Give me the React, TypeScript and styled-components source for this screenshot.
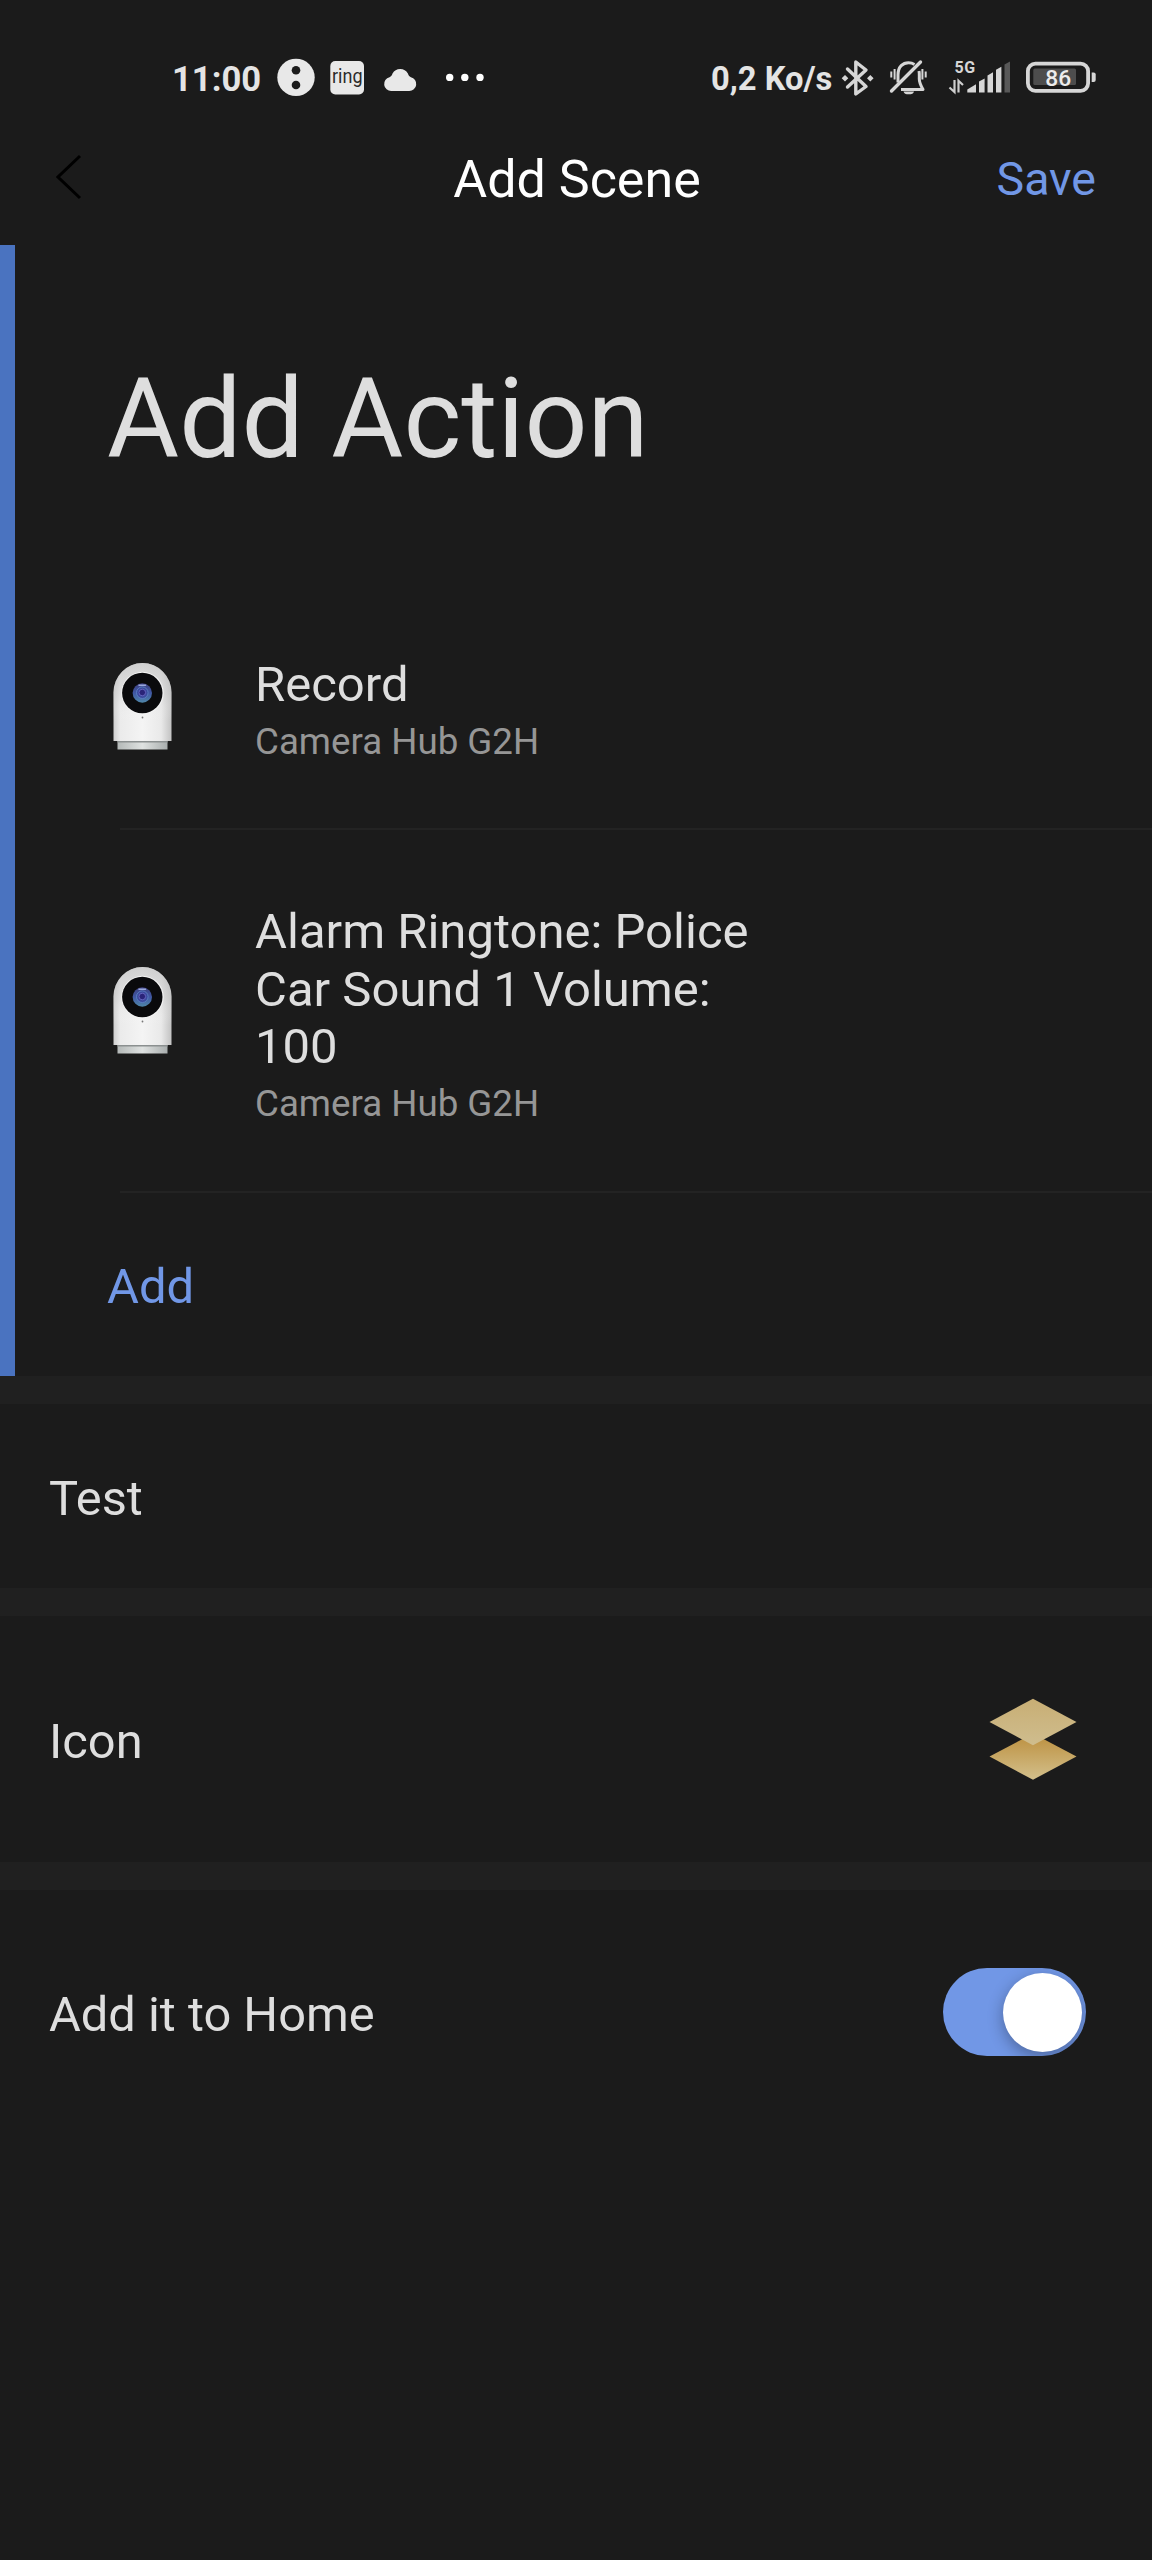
import React, { useState } from 'react';
import styled, { createGlobalStyle } from 'styled-components';

const color = {
  bg: '#1b1b1b',
  band: '#202020',
  line: '#232323',
  text: '#dedede',
  muted: '#969696',
  accent: '#7197e6',
  rail: '#4a73c0',
  status: '#e4e4e4',
};

const GlobalStyle = createGlobalStyle`
  *, *::before, *::after { box-sizing: border-box; }
  body {
    margin: 0;
    background: ${color.bg};
    font-family: Roboto, 'Liberation Sans', sans-serif;
    color: ${color.text};
  }
`;

const Screen = styled.div`
  display: flex;
  flex-direction: column;
  width: 1152px;
  height: 2560px;
  background: ${color.bg};
  overflow: hidden;
`;

const StatusBar = styled.div`
  display: flex;
  justify-content: space-between;
  height: 130px;
  padding: 51px 54px 23px 172px;
  color: ${color.status};
`;

const StatusGroup = styled.div`
  display: flex;
  align-items: center;
  height: 56px;
`;

const Glyph = styled.svg<{ $gap: number }>`
  display: block;
  flex: none;
  margin-left: ${(p) => p.$gap}px;
`;

const StatusText = styled.span<{ $size: number; $width: number }>`
  width: ${(p) => p.$width}px;
  font-size: ${(p) => p.$size}px;
  font-weight: 700;
  line-height: 56px;
  white-space: nowrap;
`;

const Header = styled.header`
  display: grid;
  grid-template-columns: 1fr auto 1fr;
  align-items: start;
  height: 115px;
  padding: 0 56px;
`;

const BackButton = styled.button`
  justify-self: start;
  margin-top: 24px;
  padding: 0;
  border: 0;
  background: none;
  line-height: 0;
`;

const Title = styled.h1`
  margin: 0;
  padding-left: 2px;
  color: #fff;
  font-size: 52px;
  font-weight: 400;
  line-height: 100px;
`;

const SaveButton = styled.button`
  justify-self: end;
  padding: 0;
  border: 0;
  background: none;
  color: ${color.accent};
  font: 400 46.5px/99px Roboto, sans-serif;
`;

const ActionSection = styled.section`
  height: 1131px;
  border-left: 15px solid ${color.rail};
  padding-left: 92px;
`;

const SectionTitle = styled.h2`
  margin: 0;
  padding-top: 100px;
  font-size: 110.6px;
  font-weight: 400;
  line-height: 148px;
  height: 372px;
`;

const ActionRow = styled.div<{ $height: number }>`
  display: flex;
  height: ${(p) => p.$height}px;
`;

const DeviceIcon = styled.svg<{ $top: number }>`
  display: block;
  flex: none;
  margin-top: ${(p) => p.$top}px;
  margin-left: 6px;
`;

const ActionText = styled.div<{ $top: number }>`
  width: 520px;
  margin-left: 83px;
  padding-top: ${(p) => p.$top}px;
`;

const ActionName = styled.div`
  font-size: 49px;
  line-height: 57.67px;
`;

const ActionDevice = styled.div`
  margin-top: 6px;
  font-size: 36.7px;
  line-height: 44px;
  color: ${color.muted};
`;

const Divider = styled.div`
  height: 2px;
  margin-left: 13px;
  background: ${color.line};
`;

const AddButton = styled.button`
  display: block;
  margin-top: 64px;
  padding: 0;
  border: 0;
  background: none;
  color: ${color.accent};
  font: 400 49px/60px Roboto, sans-serif;
`;

const Band = styled.div`
  flex: none;
  height: 28px;
  background: ${color.band};
`;

const SettingRow = styled.div<{ $height: number; $right: number }>`
  display: flex;
  align-items: center;
  justify-content: space-between;
  flex: none;
  height: ${(p) => p.$height}px;
  padding: 0 ${(p) => p.$right}px 0 49px;
`;

const SettingLabel = styled.span`
  padding-top: 5px;
  font-size: 48.8px;
  line-height: 60px;
`;

const Toggle = styled.button<{ $on: boolean }>`
  display: flex;
  align-items: center;
  justify-content: ${(p) => (p.$on ? 'flex-end' : 'flex-start')};
  width: 143.5px;
  height: 87.5px;
  padding: 0 4px;
  border: 0;
  border-radius: 44px;
  background: ${(p) => (p.$on ? color.accent : '#444')};
  overflow: hidden;
`;

const Knob = styled.span`
  width: 79px;
  height: 79px;
  border-radius: 50%;
  background: #fff;
  box-shadow: 0 5px 16px rgba(0, 0, 0, 0.32);
`;

function StatusIconsLeft() {
  return (
    <Glyph $gap={14} width="210" height="56" viewBox="275 51 210 56" fill="#e8e8e8">
      <circle cx="296" cy="77.4" r="18.7" />
      <circle cx="296" cy="70.3" r="4.3" fill={color.bg} />
      <circle cx="296" cy="85" r="4.3" fill={color.bg} />
      <rect x="330.3" y="61" width="33.7" height="33.4" rx="5" />
      <text
        x="332"
        y="82.5"
        fill="#2a2a2a"
        fontFamily="Roboto, sans-serif"
        fontSize="21"
        textLength="30.5"
        lengthAdjust="spacingAndGlyphs"
      >
        ring
      </text>
      <path d="M391.3 91 A7 7 0 0 1 389.5 77.2 C391.2 76.7 391.9 75.5 392.5 73.6 A8.8 8.8 0 0 1 407.9 73.6 C408.5 75.5 409.2 76.7 410.9 77.2 A7 7 0 0 1 409.1 91 Z" />
      <circle cx="449.7" cy="77.4" r="3.7" fill="#fff" />
      <circle cx="464.8" cy="77.4" r="3.7" fill="#fff" />
      <circle cx="480" cy="77.4" r="3.7" fill="#fff" />
    </Glyph>
  );
}

function StatusIconsRight() {
  return (
    <Glyph $gap={4} width="258" height="56" viewBox="840 51 258 56" fill="none">
      <path
        d="M847.5 69 L866 86.5 L855.8 94 V62 L866 70 L847.5 87"
        stroke="#d6d6d6"
        strokeWidth="3.4"
        strokeLinejoin="round"
        strokeLinecap="round"
      />
      <path
        d="M845 75 l3.3 3.3 l-3.3 3.3 l-3.3 -3.3 z M870.3 75 l3.3 3.3 l-3.3 3.3 l-3.3 -3.3 z"
        fill="#d6d6d6"
      />
      <g stroke="#d6d6d6" strokeWidth="3" strokeLinejoin="round">
        <path d="M898 82.5 V75 C898 66.5 903 62.7 908.5 62.7 C911 62.7 913 63.4 914.5 64.4" />
        <path d="M919 71 C919.5 73 919.3 75 919.3 79 C919.3 83 920.5 85 923 89.5 H901" />
        <path d="M891.5 91 L920.5 62" strokeWidth="3.4" strokeLinecap="round" />
        <path d="M891.3 71.5 V77.5 M894.6 69 V79.5 M922.4 69 V79.5 M925.7 71.5 V77.5" strokeWidth="2" />
      </g>
      <path d="M903.5 91.5 h10.5 a5.3 3.3 0 0 1 -10.5 0 z" fill="#d6d6d6" />
      <text x="954.6" y="73.4" fill="#d6d6d6" fontFamily="Roboto, sans-serif" fontWeight="700" fontSize="16" textLength="20.6">
        5G
      </text>
      <path d="M954.5 80 V92 L949.5 87.5 M958.5 92.5 V80.8 L963 85" stroke="#cfcfcf" strokeWidth="2.2" />
      <g fill="#d6d6d6">
        <path d="M967.3 92.6 V89.5 L976 84.3 V92.6 z" />
        <path d="M979 92.6 V81.5 L984.6 78.5 V92.6 z" />
        <path d="M987.5 92.6 V75.5 L993 72.3 V92.6 z" />
        <path d="M996 92.6 V69.8 L1001.4 66.8 V92.6 z" />
        <path d="M1004.5 92.6 V64.5 L1010 61.5 V92.6 z" fill="#585858" />
      </g>
      <rect x="1027.9" y="63.6" width="60.2" height="27.2" rx="7.5" stroke="#d6d6d6" strokeWidth="3.8" />
      <rect x="1033.3" y="68.6" width="42.7" height="16.4" rx="1.5" fill="#4d4d4d" />
      <path d="M1091.7 72.4 h2 a2 2 0 0 1 2 2 v5.6 a2 2 0 0 1 -2 2 h-2 z" fill="#d6d6d6" />
      <text x="1045.3" y="86" fill="#ececec" fontFamily="Roboto, sans-serif" fontWeight="500" fontSize="22.8">
        86
      </text>
    </Glyph>
  );
}

function Camera({ id, top }: { id: string; top: number }) {
  return (
    <DeviceIcon $top={top} width="59" height="88" viewBox="0 0 59 88">
      <defs>
        <linearGradient id={`${id}-body`} x1="0" x2="1" y1="0" y2="0">
          <stop offset="0" stopColor="#cfcfcf" />
          <stop offset=".12" stopColor="#ebebeb" />
          <stop offset=".5" stopColor="#f4f4f4" />
          <stop offset=".82" stopColor="#e9e9e9" />
          <stop offset="1" stopColor="#c2c2c2" />
        </linearGradient>
        <linearGradient id={`${id}-top`} x1="0" x2="0" y1="0" y2="1">
          <stop offset="0" stopColor="#b4b4b4" stopOpacity=".55" />
          <stop offset=".4" stopColor="#cccccc" stopOpacity=".35" />
          <stop offset=".75" stopColor="#fff" stopOpacity="0" />
        </linearGradient>
        <linearGradient id={`${id}-base`} x1="0" x2="1" y1="0" y2="0">
          <stop offset="0" stopColor="#b4b9b8" />
          <stop offset=".5" stopColor="#dfe2e1" />
          <stop offset="1" stopColor="#a9aeae" />
        </linearGradient>
        <linearGradient id={`${id}-lens`} x1="0" x2="0" y1="0" y2="1">
          <stop offset="0" stopColor="#3d3f80" />
          <stop offset=".5" stopColor="#4058a4" />
          <stop offset="1" stopColor="#4f86a8" />
        </linearGradient>
      </defs>
      <rect x="4.5" y="76" width="50" height="10.5" fill={`url(#${id}-base)`} />
      <rect x="4.5" y="78" width="50" height="1.5" fill="#8b9090" />
      <path d="M.5 78 V29.5 a29 29.5 0 0 1 58 0 V78 z" fill={`url(#${id}-body)`} />
      <path d="M.5 78 V29.5 a29 29.5 0 0 1 58 0 V78 z" fill={`url(#${id}-top)`} />
      <circle cx="29.5" cy="30" r="21.2" fill="#f4f4f4" />
      <circle cx="29.3" cy="30" r="20.2" fill="#0a0a0c" />
      <circle cx="29.3" cy="30" r="9.7" fill={`url(#${id}-lens)`} />
      <circle cx="29.3" cy="29.7" r="5.8" fill="#3b4a9c" stroke="#5c80c4" strokeWidth=".9" />
      <circle cx="29.3" cy="29.5" r="3.3" fill="#2a2478" stroke="#6a68c4" strokeWidth=".9" />
      <path d="M26 22.2 h6.5" stroke="#9aa8dc" strokeWidth="1.5" strokeLinecap="round" />
      <circle cx="29.5" cy="54.5" r=".9" fill="#777" />
    </DeviceIcon>
  );
}

function LayersIcon() {
  return (
    <svg width="88" height="82" viewBox="0 0 88 82">
      <defs>
        <linearGradient id="layer-upper" x1="0" x2="0" y1="0" y2="1">
          <stop offset="0" stopColor="#c8ae74" />
          <stop offset="1" stopColor="#cfbd8e" />
        </linearGradient>
        <linearGradient id="layer-lower" x1="0" x2="0" y1="0" y2="1">
          <stop offset=".15" stopColor="#bf9649" />
          <stop offset="1" stopColor="#d3c08c" />
        </linearGradient>
      </defs>
      <path d="M44 35.5 L87.5 58.5 L44 81.7 L.5 58.5 z" fill="url(#layer-lower)" />
      <path d="M44 .7 L87.5 24 L44 47.2 L.5 24 z" fill="url(#layer-upper)" />
    </svg>
  );
}

export default function App() {
  const [onHome, setOnHome] = useState(true);
  return (
    <>
      <GlobalStyle />
      <Screen>
        <StatusBar>
          <StatusGroup>
            <StatusText $size={34.6} $width={89}>11:00</StatusText>
            <StatusIconsLeft />
          </StatusGroup>
          <StatusGroup>
            <StatusText $size={32.7} $width={125}>0,2 Ko/s</StatusText>
            <StatusIconsRight />
          </StatusGroup>
        </StatusBar>

        <Header>
          <BackButton aria-label="Back">
            <svg width="26" height="46" viewBox="0 0 26 46" fill="none">
              <path d="M24 2 L2 23 L24 44" stroke="#000" strokeWidth="3" />
            </svg>
          </BackButton>
          <Title>Add Scene</Title>
          <SaveButton>Save</SaveButton>
        </Header>

        <ActionSection>
          <SectionTitle>Add Action</SectionTitle>
          <ActionRow $height={211}>
            <Camera id="cam-record" top={46} />
            <ActionText $top={39}>
              <ActionName>Record</ActionName>
              <ActionDevice>Camera Hub G2H</ActionDevice>
            </ActionText>
          </ActionRow>
          <Divider />
          <ActionRow $height={361}>
            <Camera id="cam-alarm" top={137} />
            <ActionText $top={73}>
              <ActionName>Alarm Ringtone: Police Car Sound 1 Volume: 100</ActionName>
              <ActionDevice>Camera Hub G2H</ActionDevice>
            </ActionText>
          </ActionRow>
          <Divider />
          <AddButton>Add</AddButton>
        </ActionSection>

        <Band />
        <SettingRow $height={184} $right={66}>
          <SettingLabel>Test</SettingLabel>
        </SettingRow>
        <Band />
        <SettingRow $height={246} $right={75}>
          <SettingLabel>Icon</SettingLabel>
          <LayersIcon />
        </SettingRow>
        <Band />
        <SettingRow $height={244} $right={66}>
          <SettingLabel>Add it to Home</SettingLabel>
          <Toggle $on={onHome} onClick={() => setOnHome(!onHome)} aria-label="Add it to Home">
            <Knob />
          </Toggle>
        </SettingRow>
      </Screen>
    </>
  );
}
